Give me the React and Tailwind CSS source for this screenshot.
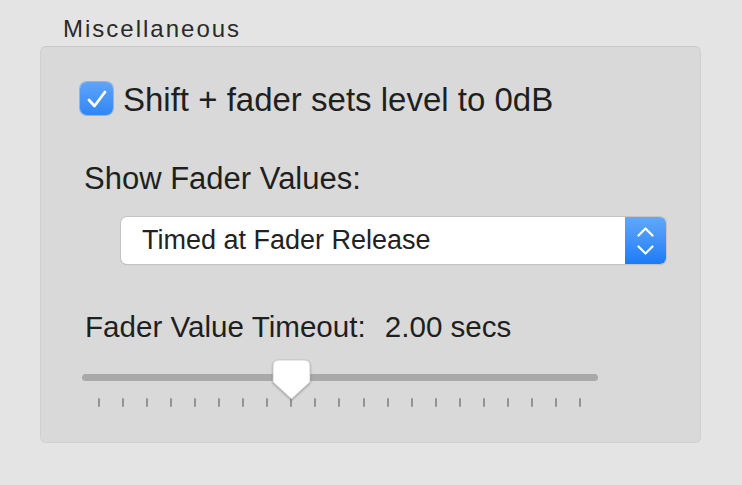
import React from 'react';

const ticks = Array.from({ length: 21 }, (_, i) => i);

const App = () => {
  return (
    <div
      className="w-[742px] h-[485px] bg-[#e4e4e4] text-[#1f1f1f] overflow-hidden"
      style={{ fontFamily: '"Liberation Sans", Arial, sans-serif' }}
    >
      {/* title */}
      <div className="pt-[17px] pl-[63px] text-[24px] leading-[24px] tracking-[2px] text-[#2a2a2a]">
        Miscellaneous
      </div>

      {/* group box */}
      <div className="mt-[5px] ml-[40px] w-[661px] h-[397px] bg-[#d9d9d9] rounded-[6px] border border-[#d0d0d0] border-t-[#c8c8c8]">
        {/* checkbox row */}
        <div className="flex items-start pt-[35px] pl-[39px]">
          <div className="w-[33px] h-[33px] rounded-[7px] bg-gradient-to-b from-[#5ea4f8] to-[#2f86f6] flex items-center justify-center shadow-[0_0_0_1px_rgba(40,110,220,0.35)]">
            <svg width="24" height="22" viewBox="0 0 24 22" fill="none">
              <path d="M4 12 L9.5 18 L20 4" stroke="white" strokeWidth="2.8" strokeLinecap="round" strokeLinejoin="round" />
            </svg>
          </div>
          <span className="ml-[10px] mt-[1px] text-[33px] leading-[33px]">Shift + fader sets level to 0dB</span>
        </div>

        {/* show fader values */}
        <div className="mt-[47px] pl-[43px] text-[31px] leading-[31px]">Show Fader Values:</div>

        {/* select */}
        <div className="mt-[23px] ml-[80px] w-[545px] h-[47px] flex rounded-[6px] bg-white shadow-[0_0_0_1px_#c4c4c4,0_1px_1px_rgba(0,0,0,0.25)] overflow-hidden">
          <div className="flex-1 flex items-center pl-[21px] text-[27px] leading-[27px] text-[#222]">
            Timed at Fader Release
          </div>
          <div className="w-[41px] h-full bg-gradient-to-b from-[#62a8fa] to-[#1a7bf5] flex flex-col items-center justify-center gap-[8px]">
            <svg width="17" height="10" viewBox="0 0 17 10" fill="none">
              <path d="M1.5 8.5 L8.5 1.5 L15.5 8.5" stroke="white" strokeWidth="2.2" strokeLinecap="round" strokeLinejoin="round" />
            </svg>
            <svg width="17" height="10" viewBox="0 0 17 10" fill="none">
              <path d="M1.5 1.5 L8.5 8.5 L15.5 1.5" stroke="white" strokeWidth="2.2" strokeLinecap="round" strokeLinejoin="round" />
            </svg>
          </div>
        </div>

        {/* timeout */}
        <div className="mt-[48px] pl-[44px] flex items-start gap-[19px] text-[29.6px] leading-[30px]">
          <span>Fader Value Timeout:</span>
          <span>2.00 secs</span>
        </div>

        {/* slider */}
        <div className="relative mt-[18px] ml-[41px] w-[516px] h-[48px]">
          <div className="absolute left-0 right-0 top-[14px] h-[7px] rounded-full bg-[#a9a9a9]" />
          <div className="absolute left-[16px] top-[38px] w-[483px] h-[9px] flex justify-between">
            {ticks.map((i) => (
              <div key={i} className="w-[2px] h-[9px] bg-[#939393] rounded-[1px]" />
            ))}
          </div>
          <svg
            className="absolute left-[190px] top-[-1px] drop-shadow-[0_1px_1px_rgba(0,0,0,0.3)]"
            width="39"
            height="41"
            viewBox="0 0 39 41"
          >
            <path
              d="M7 1 H32 Q38 1 38 7 V23 L19.5 40 L1 23 V7 Q1 1 7 1 Z"
              fill="white"
              stroke="#c8c8c8"
              strokeWidth="0.8"
            />
          </svg>
        </div>
      </div>
    </div>
  );
};

export default App;
